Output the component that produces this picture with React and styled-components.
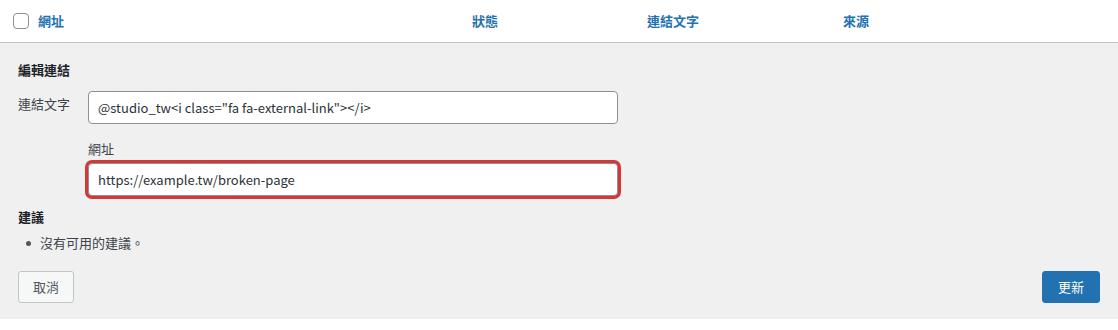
import React from "react";
import styled, { createGlobalStyle } from "styled-components";

const Global = createGlobalStyle`
  html, body { margin: 0; padding: 0; background: #fff; }
  body {
    font-family: "Noto Sans CJK TC", "Noto Sans", sans-serif;
    font-size: 13px;
    color: #3c434a;
  }
  * { box-sizing: border-box; }
`;

const Header = styled.div`
  display: grid;
  grid-template-columns: 28px 434px 175px 196px 1fr;
  height: 43px;
  border-bottom: 1px solid #c3c4c7;
  align-items: center;
  background: #fff;
`;

const CheckCell = styled.div`
  display: flex;
  align-items: center;
  padding-left: 13px;
`;

const Check = styled.span`
  display: block;
  flex: none;
  width: 16px;
  height: 16px;
  border: 1px solid #8c8f94;
  border-radius: 4px;
  background: #fff;
`;

const Col = styled.div`
  padding-left: 10px;
  font-weight: 700;
  color: #2271b1;
  line-height: 20px;
`;

const Panel = styled.div`
  background: #f0f0f1;
  padding: 17px 18px 16px 18px;
`;

const Heading = styled.div`
  font-weight: 700;
  color: #1d2327;
  line-height: 20px;
  margin-bottom: ${(p) => p.$mb || 0}px;
  margin-top: ${(p) => p.$mt || 0}px;
`;

const Row = styled.div`
  display: grid;
  grid-template-columns: 70px 530px;
  align-items: start;
`;

const Label = styled.div`
  line-height: 20px;
  padding-top: 3px;
  color: #3c434a;
`;

const Stack = styled.div`
  display: flex;
  flex-direction: column;
  margin-left: 70px;
  width: 530px;
  margin-top: 15px;
`;

const SubLabel = styled.div`
  line-height: 20px;
  margin-bottom: 4px;
  color: #3c434a;
`;

const Input = styled.input`
  width: 530px;
  height: 33px;
  border: 1px solid #8c8f94;
  border-radius: 4px;
  background: #fff;
  padding: 0 9px;
  font-family: "Noto Sans CJK TC", "Noto Sans", sans-serif;
  font-size: 13px;
  color: #2c3338;
  outline: none;
  box-shadow: ${(p) => (p.$error ? "0 0 0 3px #d63638" : "none")};
`;

const List = styled.ul`
  list-style: none;
  margin: 6px 0 0 0;
  padding: 0;
`;

const Item = styled.li`
  display: flex;
  align-items: center;
  line-height: 20px;
  color: #3c434a;
`;

const Dot = styled.span`
  flex: none;
  width: 5px;
  height: 5px;
  border-radius: 50%;
  background: #50575e;
  margin: 0 9px 0 8px;
`;

const Actions = styled.div`
  display: flex;
  justify-content: space-between;
  margin-top: 18px;
`;

const Button = styled.button`
  height: 32px;
  padding: 0 ${(p) => (p.$primary ? 15 : 14)}px;
  border-radius: 3px;
  border: 1px solid ${(p) => (p.$primary ? "#2271b1" : "#c3c4c7")};
  background: ${(p) => (p.$primary ? "#2271b1" : "#f6f7f7")};
  color: ${(p) => (p.$primary ? "#fff" : "#50575e")};
  font-family: "Noto Sans CJK TC", "Noto Sans", sans-serif;
  font-size: 13px;
  line-height: 30px;
  cursor: pointer;
`;

export default function App() {
  return (
    <>
      <Global />
      <Header>
        <CheckCell>
          <Check />
        </CheckCell>
        <Col>網址</Col>
        <Col>狀態</Col>
        <Col>連結文字</Col>
        <Col>來源</Col>
      </Header>
      <Panel>
        <Heading $mb={11}>編輯連結</Heading>
        <Row>
          <Label>連結文字</Label>
          <Input readOnly value={'@studio_tw<i class="fa fa-external-link"></i>'} />
        </Row>
        <Stack>
          <SubLabel>網址</SubLabel>
          <Input $error readOnly value="https://example.tw/broken-page" />
        </Stack>
        <Heading $mt={11}>建議</Heading>
        <List>
          <Item>
            <Dot />
            沒有可用的建議。
          </Item>
        </List>
        <Actions>
          <Button>取消</Button>
          <Button $primary>更新</Button>
        </Actions>
      </Panel>
    </>
  );
}
